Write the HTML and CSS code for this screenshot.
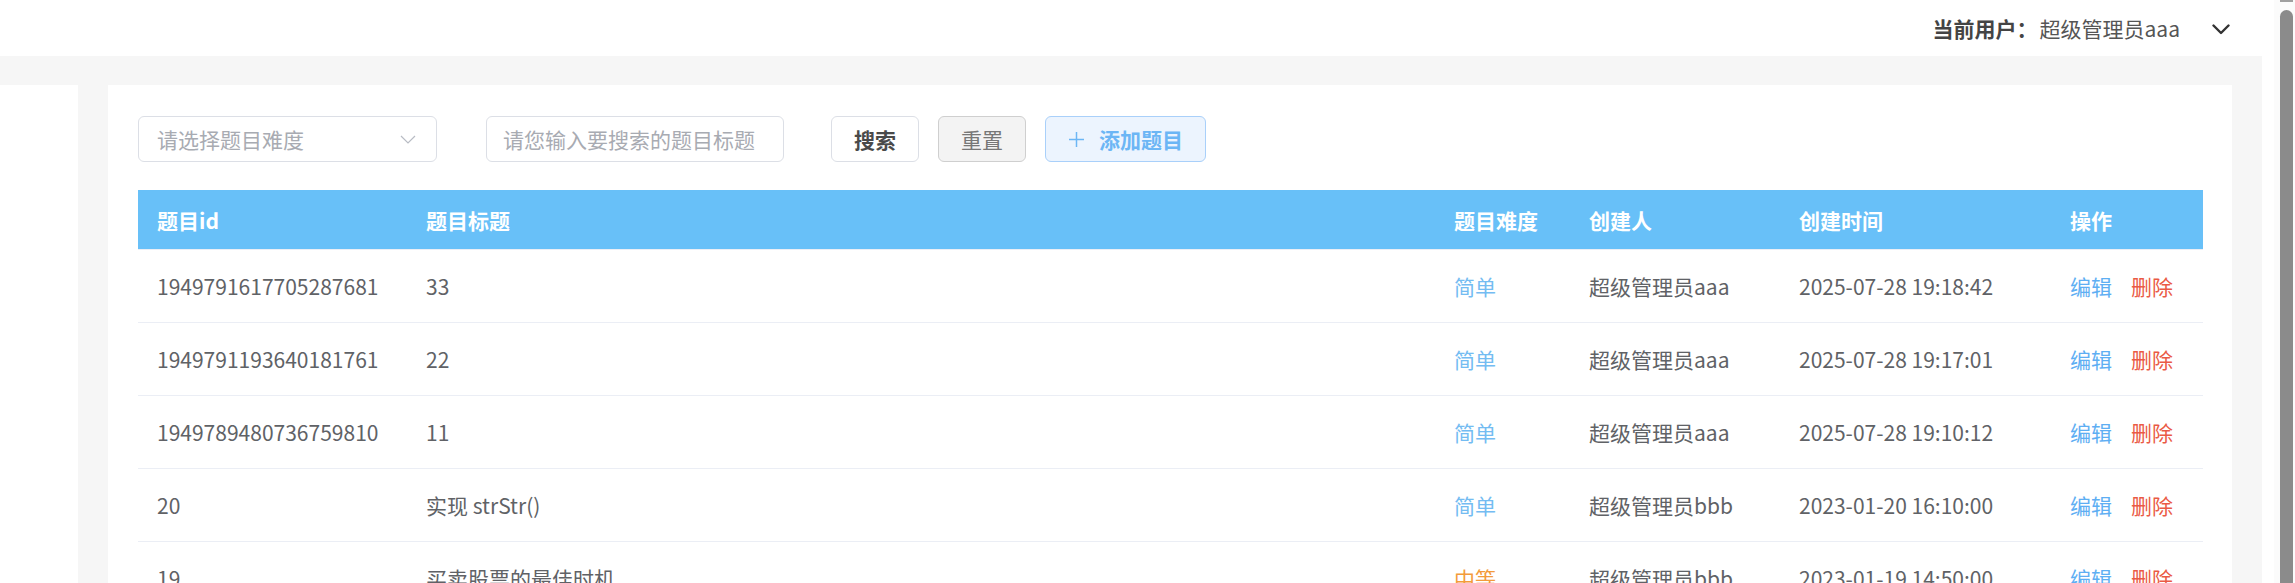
FILE: index.html
```html
<!DOCTYPE html>
<html lang="zh-CN">
<head>
<meta charset="utf-8">
<title>题目管理</title>
<link rel="stylesheet" href="styles.css">
</head>
<body>
<div class="app">
  <header class="topbar">
    <span class="user-label">当前用户：</span>
    <span class="user-name">超级管理员aaa</span>
    <svg class="user-caret" width="18" height="11" viewBox="0 0 18 11"><path d="M1.5 1.5 L9 9 L16.5 1.5" fill="none" stroke="#333" stroke-width="2.4" stroke-linecap="round" stroke-linejoin="round"/></svg>
  </header>
  <main class="main">
    <aside class="side"></aside>
    <section class="card">
      <div class="toolbar">
        <div class="select">
          <span class="placeholder">请选择题目难度</span>
          <svg class="select-caret" width="16" height="9" viewBox="0 0 16 9"><path d="M1 1 L8 8 L15 1" fill="none" stroke="#b8bcc4" stroke-width="1.2"/></svg>
        </div>
        <div class="input"><span class="placeholder">请您输入要搜索的题目标题</span></div>
        <button class="btn btn-search">搜索</button>
        <button class="btn btn-reset">重置</button>
        <button class="btn btn-add"><svg class="plus" width="17" height="17" viewBox="0 0 17 17"><path d="M8.5 1 V16 M1 8.5 H16" stroke="#6cb6f5" stroke-width="1.5"/></svg>添加题目</button>
      </div>
      <table class="grid">
        <colgroup>
          <col class="c-id"><col class="c-title"><col class="c-diff"><col class="c-user"><col class="c-time"><col class="c-op">
        </colgroup>
        <thead>
          <tr><th>题目id</th><th>题目标题</th><th>题目难度</th><th>创建人</th><th>创建时间</th><th>操作</th></tr>
        </thead>
        <tbody>
          <tr><td>1949791617705287681</td><td>33</td><td class="easy">简单</td><td>超级管理员aaa</td><td>2025-07-28 19:18:42</td><td><span class="op-edit">编辑</span><span class="op-del">删除</span></td></tr>
          <tr><td>1949791193640181761</td><td>22</td><td class="easy">简单</td><td>超级管理员aaa</td><td>2025-07-28 19:17:01</td><td><span class="op-edit">编辑</span><span class="op-del">删除</span></td></tr>
          <tr><td>1949789480736759810</td><td>11</td><td class="easy">简单</td><td>超级管理员aaa</td><td>2025-07-28 19:10:12</td><td><span class="op-edit">编辑</span><span class="op-del">删除</span></td></tr>
          <tr><td>20</td><td>实现 strStr()</td><td class="easy">简单</td><td>超级管理员bbb</td><td>2023-01-20 16:10:00</td><td><span class="op-edit">编辑</span><span class="op-del">删除</span></td></tr>
          <tr><td>19</td><td>买卖股票的最佳时机</td><td class="medium">中等</td><td>超级管理员bbb</td><td>2023-01-19 14:50:00</td><td><span class="op-edit">编辑</span><span class="op-del">删除</span></td></tr>
        </tbody>
      </table>
    </section>
  </main>
</div>
<div class="scrollbar">
  <div class="scroll-arrow"></div>
  <div class="scroll-thumb"></div>
</div>
</body>
</html>
```

FILE: styles.css
```css
html, body {
  margin: 0;
  padding: 0;
  height: 583px;
  overflow: hidden;
}
body {
  display: flex;
  font-family: "Noto Sans CJK SC", "Noto Sans", sans-serif;
  font-size: 21px;
  color: #606266;
  background: #fff;
}
.app {
  flex: 1;
  display: flex;
  flex-direction: column;
  min-width: 0;
}
.topbar {
  height: 56px;
  flex: none;
  display: flex;
  align-items: center;
  justify-content: flex-end;
  padding-right: 44px;
}
.user-label {
  font-weight: 700;
  color: #444;
}
.user-name {
  color: #555;
  margin-left: 2px;
}
.user-caret {
  margin-left: 32px;
  margin-top: 2px;
}
.main {
  flex: 1;
  display: flex;
  gap: 30px;
  background: #f6f6f6;
  padding: 29px 30px 0 0;
  margin-right: 12px;
  min-height: 0;
}
.side {
  width: 78px;
  flex: none;
  background: #fff;
}
.card {
  flex: 1;
  background: #fff;
  padding: 31px 29px 0 30px;
  min-width: 0;
}
.toolbar {
  display: flex;
  align-items: center;
  height: 46px;
  margin-bottom: 28px;
}
.select, .input {
  box-sizing: border-box;
  height: 46px;
  border: 1px solid #dcdfe6;
  border-radius: 6px;
  display: flex;
  align-items: center;
  padding: 0 18px;
}
.select {
  width: 299px;
  justify-content: space-between;
}
.input {
  width: 298px;
  margin-left: 49px;
  padding-left: 16px;
}
.placeholder {
  color: #a8abb2;
  white-space: nowrap;
}
.select-caret {
  margin-right: 2px;
}
.btn {
  box-sizing: border-box;
  height: 46px;
  border-radius: 6px;
  font-family: inherit;
  font-size: 21px;
  padding: 0;
  display: flex;
  align-items: center;
  justify-content: center;
}
.btn-search {
  width: 88px;
  margin-left: 47px;
  background: #fff;
  border: 1px solid #dcdfe6;
  color: #4a4a4a;
  font-weight: 700;
}
.btn-reset {
  width: 88px;
  margin-left: 19px;
  background: #f3f3f3;
  border: 1px solid #cfcfcf;
  color: #777;
}
.btn-add {
  width: 161px;
  margin-left: 19px;
  background: #ecf4fe;
  border: 1px solid #a9d0fa;
  color: #6cb6f5;
  font-weight: 700;
}
.plus {
  margin-right: 14px;
}
.grid {
  width: 100%;
  table-layout: fixed;
  border-collapse: collapse;
}
.c-id { width: 269px; }
.c-title { width: 1028px; }
.c-diff { width: 135px; }
.c-user { width: 210px; }
.c-time { width: 271px; }
.c-op { width: 152px; }
.grid th {
  background: #68c0f8;
  color: #fff;
  font-weight: 700;
  text-align: left;
  height: 59px;
  padding: 0 0 0 19px;
  border-bottom: 1px solid #ebeef5;
}
.grid td {
  height: 72px;
  padding: 0 0 0 19px;
  border-bottom: 1px solid #ebeef5;
  white-space: nowrap;
  overflow: hidden;
}
.easy { color: #74bcf2; }
.medium { color: #f39b3a; }
.op-edit { color: #5eaef3; }
.op-del { color: #ea5a45; margin-left: 19px; }
.scrollbar {
  width: 21px;
  flex: none;
  background: #fbfbfb;
  display: flex;
  flex-direction: column;
  align-items: center;
}
.scroll-arrow {
  width: 13px;
  height: 2px;
  background: #a0a0a0;
  margin-left: 4px;
}
.scroll-thumb {
  flex: 1;
  width: 13px;
  margin-top: 8px;
  margin-left: 4px;
  background: #8b8b8b;
  border-radius: 7px 7px 0 0;
}
```
